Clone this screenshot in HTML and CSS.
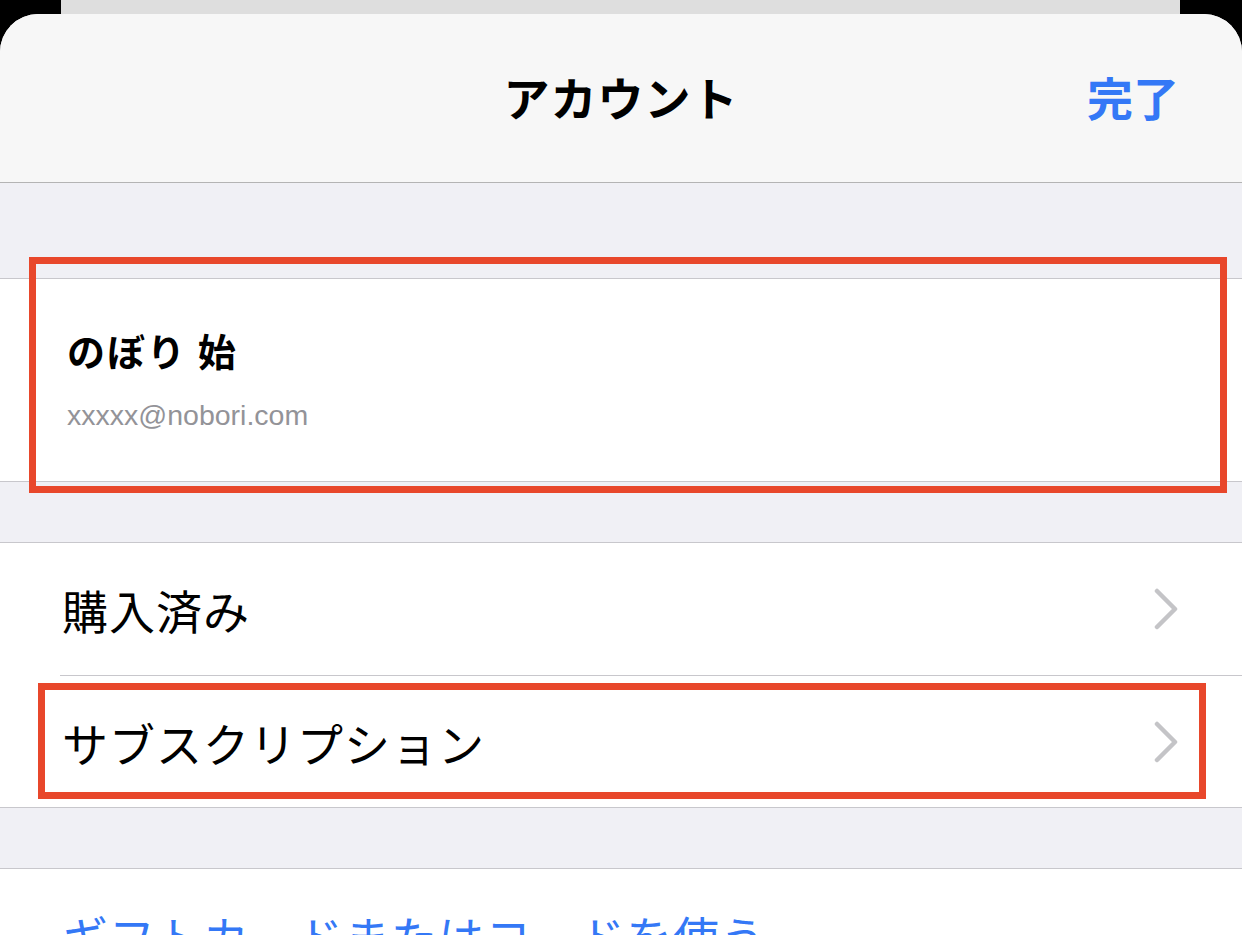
FILE: index.html
```html
<!DOCTYPE html>
<html lang="ja">

<head>
    <meta charset="UTF-8">
    <meta name="viewport" content="width=device-width, initial-scale=1.0">
    <title>アカウント</title>
    <link rel="stylesheet" href="styles.css">
</head>

<body>
    <div class="back_card"></div>
    <div class="sheet">
        <header class="navbar">
            <span></span>
            <h1 class="navbar_title">アカウント</h1>
            <a class="navbar_done">完了</a>
        </header>

        <div class="spacer spacer_top"></div>

        <section class="group">
            <div class="profile">
                <p class="profile_name">のぼり 始</p>
                <p class="profile_mail">xxxxx@nobori.com</p>
            </div>
        </section>

        <div class="spacer"></div>

        <section class="group">
            <div class="row">
                <span class="row_label">購入済み</span>
                <svg class="chevron" width="24" height="42" viewBox="0 0 24 42"><path d="M3 3 L21 21 L3 39" /></svg>
            </div>
            <div class="row">
                <span class="row_label">サブスクリプション</span>
                <svg class="chevron" width="24" height="42" viewBox="0 0 24 42"><path d="M3 3 L21 21 L3 39" /></svg>
            </div>
        </section>

        <div class="spacer"></div>

        <section class="group">
            <div class="row">
                <span class="row_label row_link">ギフトカードまたはコードを使う</span>
            </div>
        </section>
    </div>

    <!-- annotations -->
    <div class="mark mark_profile"></div>
    <div class="mark mark_sub"></div>
</body>

</html>
```

FILE: styles.css
```css
* {
    box-sizing: border-box;
}

body {
    margin: 0;
    width: 1242px;
    height: 935px;
    overflow: hidden;
    position: relative;
    background-color: #000;
    font-family: "Noto Sans CJK JP", sans-serif;
    color: #000;
}

.back_card {
    height: 14px;
    margin: 0 62px 0 61px;
    background-color: #dedede;
}

.sheet {
    height: 921px;
    border-radius: 38px 38px 0 0;
    overflow: hidden;
    background-color: #f0f0f5;
}

.navbar {
    display: grid;
    grid-template-columns: 1fr auto 1fr;
    align-items: center;
    height: 169px;
    padding: 0 63px 4px;
    background-color: #f7f7f7;
    border-bottom: 1px solid #b4b4b4;
}

.navbar_title {
    margin: 0;
    font-size: 46px;
    font-weight: bold;
    line-height: 60px;
    letter-spacing: 1px;
}

.navbar_done {
    justify-self: end;
    font-size: 46px;
    font-weight: bold;
    color: #3478f6;
}

.spacer {
    height: 60px;
}

.spacer_top {
    height: 95px;
}

.group {
    background-color: #fff;
    border-top: 1px solid #c8c7cc;
    border-bottom: 1px solid #c8c7cc;
}

.profile {
    height: 202px;
    padding: 48px 0 0 67px;
}

.profile_name {
    margin: 0;
    font-size: 38px;
    font-weight: bold;
    line-height: 46px;
    letter-spacing: 2px;
}

.profile_mail {
    margin: 26px 0 0;
    font-family: "Liberation Sans", sans-serif;
    font-size: 28.5px;
    line-height: 32px;
    color: #939398;
}

.row {
    display: flex;
    align-items: center;
    justify-content: space-between;
    height: 132px;
    padding: 0 64px 0 62px;
}

.row + .row {
    border-top: 1px solid #c8c7cc;
    margin-left: 60px;
    padding-left: 2px;
}

.row_label {
    font-size: 46px;
    font-weight: 400;
    line-height: 60px;
    letter-spacing: 1px;
}

.row_link {
    color: #3478f6;
}

.chevron path {
    fill: none;
    stroke: #c4c4c7;
    stroke-width: 4.5;
    stroke-linecap: round;
    stroke-linejoin: round;
}

.mark {
    position: absolute;
    border: 7px solid #e8472b;
}

.mark_profile {
    left: 29px;
    top: 257px;
    width: 1198px;
    height: 236px;
}

.mark_sub {
    left: 38px;
    top: 683px;
    width: 1168px;
    height: 116px;
}
```
